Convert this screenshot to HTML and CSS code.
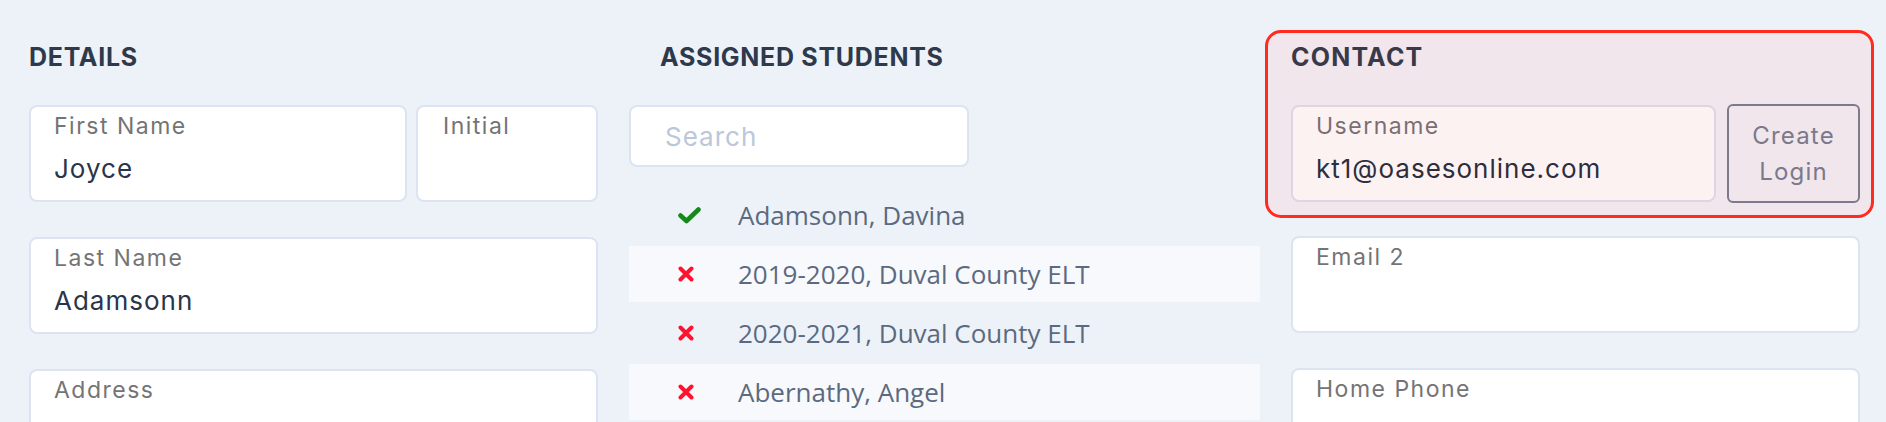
FILE: index.html
```html
<!DOCTYPE html>
<html lang="en">
<head>
<meta charset="utf-8">
<title>Teacher</title>
<link rel="stylesheet" href="styles.css">
</head>
<body>
<div class="page">
  <section class="col">
    <h2 class="heading">DETAILS</h2>
    <div class="stack">
      <div class="pair">
        <div class="field f-first"><span class="label">First Name</span><span class="value">Joyce</span></div>
        <div class="field f-initial"><span class="label">Initial</span><span class="value"></span></div>
      </div>
      <div class="field"><span class="label">Last Name</span><span class="value">Adamsonn</span></div>
      <div class="field"><span class="label">Address</span><span class="value"></span></div>
    </div>
  </section>

  <section class="col">
    <h2 class="heading heading-indent">ASSIGNED STUDENTS</h2>
    <input class="search" type="text" placeholder="Search">
    <ul class="list">
      <li class="row"><span class="ico"><svg width="23" height="17" viewBox="0 0 23 17"><path d="M2.5 8.5 L8.5 14 L20.5 2.5" fill="none" stroke="#15891a" stroke-width="4.6" stroke-linecap="round" stroke-linejoin="round"/></svg></span><span class="name">Adamsonn, Davina</span></li>
      <li class="row"><span class="ico"><svg width="16" height="16" viewBox="0 0 16 16"><path d="M2.5 2.5 L13.5 13.5 M13.5 2.5 L2.5 13.5" fill="none" stroke="#ff1430" stroke-width="4" stroke-linecap="round"/></svg></span><span class="name">2019-2020, Duval County ELT</span></li>
      <li class="row"><span class="ico"><svg width="16" height="16" viewBox="0 0 16 16"><path d="M2.5 2.5 L13.5 13.5 M13.5 2.5 L2.5 13.5" fill="none" stroke="#ff1430" stroke-width="4" stroke-linecap="round"/></svg></span><span class="name">2020-2021, Duval County ELT</span></li>
      <li class="row"><span class="ico"><svg width="16" height="16" viewBox="0 0 16 16"><path d="M2.5 2.5 L13.5 13.5 M13.5 2.5 L2.5 13.5" fill="none" stroke="#ff1430" stroke-width="4" stroke-linecap="round"/></svg></span><span class="name">Abernathy, Angel</span></li>
    </ul>
  </section>

  <section class="col">
    <div class="contact-box">
      <h2 class="heading heading-contact">CONTACT</h2>
      <div class="pair pair-contact">
        <div class="field f-user"><span class="label">Username</span><span class="value">kt1@oasesonline.com</span></div>
        <button class="btn" type="button">Create<br>Login</button>
      </div>
    </div>
    <div class="stack">
      <div class="field"><span class="label">Email 2</span><span class="value"></span></div>
      <div class="field"><span class="label">Home Phone</span><span class="value"></span></div>
    </div>
  </section>
</div>
</body>
</html>
```

FILE: styles.css
```css
html, body {
  margin: 0;
  padding: 0;
  overflow: hidden;
  height: 100%;
}
body {
  background: #edf2f9;
  font-family: "Inter", "Liberation Sans", sans-serif;
  color: #2b3548;
}
.page {
  display: grid;
  grid-template-columns: 569px 631px 569px;
  column-gap: 31px;
  padding-left: 29px;
}
.col {
  padding-top: 42px;
  display: flex;
  flex-direction: column;
  min-width: 0;
}
.heading {
  margin: 0 0 33px 0;
  font-size: 25px;
  line-height: 30px;
  font-weight: 700;
  letter-spacing: 0.7px;
  color: #2e394c;
}
.heading-indent {
  padding-left: 31px;
}
.heading-contact {
  color: #3a3947;
  letter-spacing: 1.2px;
  margin-bottom: 32px;
}
.stack {
  display: flex;
  flex-direction: column;
  gap: 35px;
}
.pair {
  display: flex;
  align-items: center;
  gap: 9px;
}
.field {
  box-sizing: border-box;
  height: 97px;
  background: #ffffff;
  border: 2px solid #dbe4f0;
  border-radius: 8px;
  padding: 6px 23px 0 23px;
  display: flex;
  flex-direction: column;
}
.f-first { width: 378px; }
.f-initial { width: 182px; padding-left: 25px; }
.label {
  font-size: 23px;
  line-height: 26px;
  color: #747474;
  letter-spacing: 1.5px;
}
.value {
  margin-top: 15px;
  font-size: 26px;
  line-height: 30px;
  color: #2b3548;
  letter-spacing: 1px;
}
.search {
  box-sizing: border-box;
  width: 340px;
  height: 62px;
  margin: 0;
  border: 2px solid #dbe4f0;
  border-radius: 8px;
  background: #ffffff;
  padding: 0 0 0 34px;
  font-family: inherit;
  font-size: 26px;
  color: #2b3548;
  outline: none;
}
.search::placeholder {
  color: #bcc7d9;
  letter-spacing: 1px;
}
.list {
  list-style: none;
  margin: 20px 0 0 0;
  padding: 0;
  display: flex;
  flex-direction: column;
  gap: 3px;
}
.row {
  height: 56px;
  display: flex;
  align-items: center;
  padding-left: 49px;
  font-family: "Open Sans", "Noto Sans", sans-serif;
  font-size: 26px;
  color: #5b6a80;
}
.row:nth-child(even) {
  background: #f7f9fd;
}
.ico {
  width: 60px;
  display: flex;
  align-items: center;
}
.contact-box {
  margin: -12px -14px 18px -26px;
  padding: 9px 11px 12px 23px;
  border: 3px solid #ff2b1f;
  border-radius: 16px;
  background: #f0e6ec;
}
.f-user {
  width: 425px;
  background: #fdf2f2;
  border-color: #ddd6e2;
}
.f-user .label { color: #7a6e72; }
.f-user .value { color: #2e2d3c; }
.btn {
  box-sizing: border-box;
  width: 133px;
  height: 99px;
  margin-left: 2px;
  border: 2px solid #7c7a8b;
  border-radius: 6px;
  background: transparent;
  font-family: inherit;
  font-size: 24px;
  line-height: 36px;
  color: #7b798b;
  padding: 0;
  letter-spacing: 1.2px;
}
```
